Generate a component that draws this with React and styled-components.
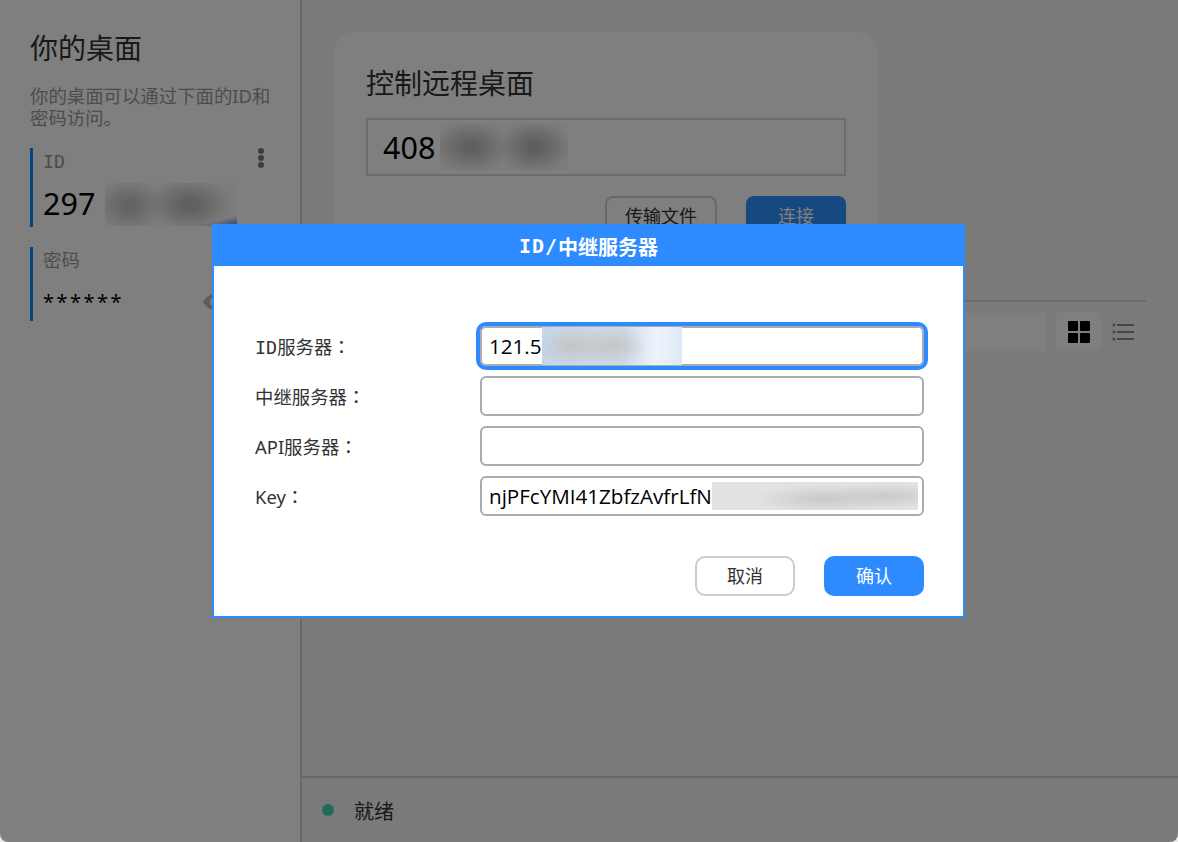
import styled, { createGlobalStyle } from "styled-components"

const GlobalStyle = createGlobalStyle`
    html, body {
        margin: 0;
        padding: 0;
        background: #e8e8e8;
    }
    * {
        box-sizing: border-box;
    }
    body {
        font-family: "Noto Sans", "Noto Sans CJK SC", sans-serif;
        font-size: 18px;
        color: #333;
    }
`

const blurs = {
    id: `radial-gradient(ellipse 34px 26px at 18% 52%, #c6c6c6 15%, transparent),
         radial-gradient(ellipse 42px 26px at 64% 50%, #c2c2c2 20%, transparent),
         linear-gradient(165deg, transparent 86%, #3f8fe8 100%),
         #f8f8f8`,
    remote: `radial-gradient(ellipse 38px 26px at 24% 50%, #c0c0c0 15%, transparent),
         radial-gradient(ellipse 36px 26px at 74% 50%, #bcbcbc 15%, transparent),
         #f8f8f8`,
    server: `radial-gradient(ellipse 34px 20px at 22% 50%, #c6c6c6 10%, transparent),
         radial-gradient(ellipse 34px 20px at 50% 50%, #c6c6c6 10%, transparent),
         linear-gradient(90deg, #c4d6ea 0%, #cfdcea 60%, #eef4fb 82%, #dde9f8 100%)`,
    key: `radial-gradient(ellipse 70px 14px at 55% 60%, #c8c8c8, transparent),
         radial-gradient(ellipse 60px 13px at 85% 50%, #cacaca, transparent),
         #e2e2e2`,
}

const Window = styled.div`
    position: relative;
    width: 1178px;
    height: 842px;
    display: flex;
    overflow: hidden;
    border-radius: 0 0 8px 8px;
`
const Sidebar = styled.aside`
    width: 302px;
    flex-shrink: 0;
    background: #ffffff;
    border-right: 2px solid #d0d0d0;
    padding: 28px 30px 0;
`
const Title = styled.h1`
    margin: 0;
    font-size: 28px;
    font-weight: 400;
    line-height: 40px;
    color: #333;
`
const Description = styled.p`
    margin: 17px 0 0;
    font-size: 18.4px;
    line-height: 22px;
    color: #999;
    width: 242px;
`
const InfoBlock = styled.div`
    position: relative;
    margin-top: ${(props) => props.$top}px;
    height: ${(props) => props.$height}px;
    border-left: 3px solid #0a8aff;
    padding-left: 10px;
`
const InfoLabel = styled.div`
    font-size: 18.4px;
    line-height: 26px;
    color: #999;
`
const InfoValue = styled.div`
    display: flex;
    align-items: center;
    margin-top: ${(props) => props.$top}px;
    font-size: ${(props) => props.$size}px;
    letter-spacing: ${(props) => props.$spacing || 0}px;
    line-height: 40px;
    color: #000;
`
const ValueText = styled.span`
    position: relative;
    top: ${(props) => props.$shift}px;
`
const Blur = styled.span`
    display: block;
    flex-shrink: 0;
    width: ${(props) => props.$width}px;
    height: ${(props) => props.$height}px;
    margin-left: ${(props) => props.$left}px;
    background: ${(props) => blurs[props.$kind]};
`
const Dots = styled.svg`
    position: absolute;
    top: 0;
    right: 4px;
    width: 10px;
    height: 20px;
`
const Eye = styled.svg`
    width: 26px;
    height: 20px;
    margin-left: 78px;
`
const Main = styled.main`
    flex: 1;
    display: flex;
    flex-direction: column;
    background: #f4f4f4;
`
const Content = styled.div`
    flex: 1;
    padding: 32px 32px 0;
`
const Card = styled.section`
    width: 544px;
    height: 240px;
    background: #ffffff;
    border-radius: 20px;
    padding: 31px 32px 0;
`
const RemoteInput = styled.div`
    display: flex;
    align-items: center;
    margin-top: 15px;
    height: 58px;
    border: 2px solid #d8d8d8;
    padding-left: 15px;
    font-size: 30.5px;
    color: #000;
`
const CardActions = styled.div`
    display: flex;
    justify-content: flex-end;
    gap: 29px;
    margin-top: 20px;
`
const CardButton = styled.button`
    width: ${(props) => props.$width}px;
    height: 40px;
    border-radius: 8px;
    font: inherit;
    color: ${(props) => (props.$primary ? "#fff" : "#333")};
    background: ${(props) => (props.$primary ? "#2a92ff" : "transparent")};
    border: 2px solid ${(props) => (props.$primary ? "#2a92ff" : "#d0d0d0")};
    padding: 0 0 3px;
`
const Divider = styled.div`
    margin: 28px 0 0;
    height: 2px;
    background: #d8d8d8;
`
const Toolbar = styled.div`
    display: flex;
    align-items: center;
    justify-content: flex-end;
    margin-top: 10px;
    padding-right: 11px;
`
const SearchBox = styled.div`
    width: 300px;
    height: 38px;
    background: #ffffff;
`
const ViewButton = styled.div`
    display: flex;
    align-items: center;
    justify-content: center;
    width: ${(props) => props.$width}px;
    height: 39px;
    margin-left: 10px;
    border-radius: 6px;
    background: ${(props) => (props.$active ? "#ffffff" : "transparent")};
`
const StatusBar = styled.footer`
    display: flex;
    align-items: center;
    height: 66px;
    border-top: 2px solid #d0d0d0;
    padding-left: 20px;
`
const StatusDot = styled.span`
    width: 12px;
    height: 12px;
    border-radius: 50%;
    background: #3fd6b4;
`
const StatusText = styled.span`
    margin-left: 20px;
    font-size: 20px;
    color: #333;
`
const Scrim = styled.div`
    position: absolute;
    inset: 0;
    display: flex;
    align-items: center;
    justify-content: center;
    background: rgba(0, 0, 0, 0.5);
`
const Dialog = styled.div`
    width: 753px;
    height: 394px;
    margin-right: 1px;
    display: flex;
    flex-direction: column;
    background: #fff;
    border: 2px solid #2e8bff;
    border-top: none;
`
const DialogHeader = styled.header`
    height: 42px;
    margin: 0 -2px;
    padding-top: 2px;
    display: flex;
    align-items: center;
    justify-content: center;
    background: #2e8bff;
    color: #fff;
    font-size: 20px;
    font-weight: 700;
`
const HeaderLatin = styled.span`
    font-family: "DejaVu Sans Mono", monospace;
    font-size: 20px;
    letter-spacing: 1px;
`
const Form = styled.div`
    display: flex;
    flex-direction: column;
    gap: 10px;
    padding: 60px 39px 0 41px;
`
const Row = styled.div`
    display: grid;
    grid-template-columns: 225px 1fr;
    align-items: center;
`
const Label = styled.label`
    font-size: 18.4px;
    color: #333;
`
const LatinMono = styled.span`
    font-family: "DejaVu Sans Mono", "Noto Sans", monospace;
    font-size: 18.4px;
`
const Colon = styled.span`
    font-family: "Noto Sans CJK TC", sans-serif;
`
const Field = styled.div`
    display: flex;
    align-items: center;
    height: 40px;
    padding-left: 7px;
    overflow: ${(props) => (props.$focused ? "visible" : "hidden")};
    border: 2px solid #aaaab0;
    border-radius: 6px;
    font-family: "Open Sans", "Noto Sans", sans-serif;
    font-size: 20.6px;
    color: #000;
    white-space: nowrap;
    outline: ${(props) => (props.$focused ? "4px solid #2e8bff" : "none")};
`
const Actions = styled.div`
    display: flex;
    justify-content: flex-end;
    gap: 29px;
    padding: 40px 39px 0 0;
`
const DialogButton = styled.button`
    width: 100px;
    height: 40px;
    padding: 0 0 2px;
    border-radius: 10px;
    font: inherit;
    font-size: 18px;
    color: ${(props) => (props.$primary ? "#fff" : "#333")};
    background: ${(props) => (props.$primary ? "#2e8bff" : "#fff")};
    border: 2px solid ${(props) => (props.$primary ? "#2e8bff" : "#ccc")};
`

const fields = [
    { latin: "ID", label: "服务器", value: "121.5", blur: "server", width: 140, height: 38, focused: true },
    { label: "中继服务器" },
    { label: "API服务器" },
    { label: "Key", value: "njPFcYMI41ZbfzAvfrLfN", blur: "key", width: 206, height: 28 },
]

export default function App() {
    return (
        <>
            <GlobalStyle />
            <Window>
                <Sidebar>
                    <Title>你的桌面</Title>
                    <Description>你的桌面可以通过下面的ID和密码访问。</Description>
                    <InfoBlock $top={19} $height={79}>
                        <InfoLabel><LatinMono>ID</LatinMono></InfoLabel>
                        <InfoValue $top={8} $size={30.5}>
                            <ValueText $shift={-2}>297</ValueText>
                            <Blur $kind="id" $width={132} $height={43} $left={10} />
                        </InfoValue>
                        <Dots viewBox="0 0 10 20">
                            <circle cx="5" cy="3" r="3" fill="#7a7a7a" />
                            <circle cx="5" cy="10" r="3" fill="#7a7a7a" />
                            <circle cx="5" cy="17" r="3" fill="#7a7a7a" />
                        </Dots>
                    </InfoBlock>
                    <InfoBlock $top={20} $height={74}>
                        <InfoLabel>密码</InfoLabel>
                        <InfoValue $top={9} $size={20} $spacing={2.5}>
                            ******
                            <Eye viewBox="0 0 26 20">
                                <path d="M1 10c3-5 7-8 12-8s9 3 12 8c-3 5-7 8-12 8S4 15 1 10z" fill="#bbb" />
                                <circle cx="13" cy="10" r="5" fill="#fff" />
                            </Eye>
                        </InfoValue>
                    </InfoBlock>
                </Sidebar>
                <Main>
                    <Content>
                        <Card>
                            <Title>控制远程桌面</Title>
                            <RemoteInput>
                                408
                                <Blur $kind="remote" $width={128} $height={48} $left={5} />
                            </RemoteInput>
                            <CardActions>
                                <CardButton $width={112}>传输文件</CardButton>
                                <CardButton $width={100} $primary>连接</CardButton>
                            </CardActions>
                        </Card>
                        <Divider />
                        <Toolbar>
                            <SearchBox />
                            <ViewButton $active $width={45}>
                                <svg width="24" height="24" viewBox="0 0 24 24">
                                    <rect x="1" y="1" width="10" height="10" rx="1" fill="#000" />
                                    <rect x="13" y="1" width="10" height="10" rx="1" fill="#000" />
                                    <rect x="1" y="13" width="10" height="10" rx="1" fill="#000" />
                                    <rect x="13" y="13" width="10" height="10" rx="1" fill="#000" />
                                </svg>
                            </ViewButton>
                            <ViewButton $width={24}>
                                <svg width="22" height="18" viewBox="0 0 22 18">
                                    <g fill="#8c8c8c">
                                        <circle cx="2" cy="2" r="1.5" />
                                        <circle cx="2" cy="9" r="1.5" />
                                        <circle cx="2" cy="16" r="1.5" />
                                        <rect x="5" y="1" width="17" height="2" />
                                        <rect x="5" y="8" width="17" height="2" />
                                        <rect x="5" y="15" width="17" height="2" />
                                    </g>
                                </svg>
                            </ViewButton>
                        </Toolbar>
                    </Content>
                    <StatusBar>
                        <StatusDot />
                        <StatusText>就绪</StatusText>
                    </StatusBar>
                </Main>
                <Scrim>
                    <Dialog>
                        <DialogHeader>
                            <HeaderLatin>ID/</HeaderLatin>中继服务器
                        </DialogHeader>
                        <Form>
                            {fields.map((field) => (
                                <Row key={field.label}>
                                    <Label>
                                        {field.latin && <LatinMono>{field.latin}</LatinMono>}
                                        {field.label}
                                        <Colon>：</Colon>
                                    </Label>
                                    <Field $focused={field.focused}>
                                        {field.value}
                                        {field.blur && (
                                            <Blur $kind={field.blur} $width={field.width} $height={field.height} $left={0} />
                                        )}
                                    </Field>
                                </Row>
                            ))}
                        </Form>
                        <Actions>
                            <DialogButton>取消</DialogButton>
                            <DialogButton $primary>确认</DialogButton>
                        </Actions>
                    </Dialog>
                </Scrim>
            </Window>
        </>
    )
}
